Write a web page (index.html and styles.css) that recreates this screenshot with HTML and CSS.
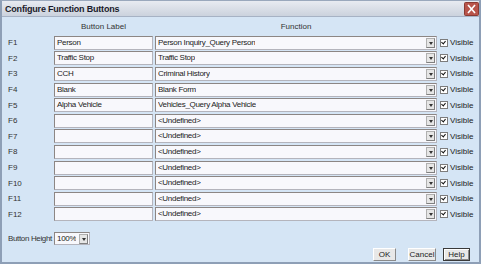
FILE: index.html
```html
<!DOCTYPE html>
<html lang="en">
<head>
	<meta charset="UTF-8">
	<title>Configure Function Buttons</title>
	<link rel="stylesheet" href="styles.css">
</head>
<body>
	<!--窗口-->
	<div class="dialog">
		<div class="titlebar">
			<span class="title">Configure Function Buttons</span>
			<span class="close">
				<svg width="15" height="14" viewBox="0 0 15 14">
					<rect x="0.5" y="0.5" width="14" height="13" rx="1" fill="#b8544a" stroke="#8a3a32"/>
					<path d="M4 3 L11 11 M11 3 L4 11" stroke="#fff" stroke-width="1.6"/>
				</svg>
			</span>
		</div>
		<div class="body">
			<div class="grid">
				<span></span>
				<span class="head">Button Label</span>
				<span class="head">Function</span>
				<span></span>

				<span class="key">F1</span>
				<span class="text">Person</span>
				<span class="select"><span class="val">Person Inquiry_Query Person</span><span class="arrow"></span></span>
				<span class="vis"><span class="check"></span>Visible</span>

				<span class="key">F2</span>
				<span class="text">Traffic Stop</span>
				<span class="select"><span class="val">Traffic Stop</span><span class="arrow"></span></span>
				<span class="vis"><span class="check"></span>Visible</span>

				<span class="key">F3</span>
				<span class="text">CCH</span>
				<span class="select"><span class="val">Criminal History</span><span class="arrow"></span></span>
				<span class="vis"><span class="check"></span>Visible</span>

				<span class="key">F4</span>
				<span class="text">Blank</span>
				<span class="select"><span class="val">Blank Form</span><span class="arrow"></span></span>
				<span class="vis"><span class="check"></span>Visible</span>

				<span class="key">F5</span>
				<span class="text">Alpha Vehicle</span>
				<span class="select"><span class="val">Vehicles_Query Alpha Vehicle</span><span class="arrow"></span></span>
				<span class="vis"><span class="check"></span>Visible</span>

				<span class="key">F6</span>
				<span class="text"></span>
				<span class="select"><span class="val">&lt;Undefined&gt;</span><span class="arrow"></span></span>
				<span class="vis"><span class="check"></span>Visible</span>

				<span class="key">F7</span>
				<span class="text"></span>
				<span class="select"><span class="val">&lt;Undefined&gt;</span><span class="arrow"></span></span>
				<span class="vis"><span class="check"></span>Visible</span>

				<span class="key">F8</span>
				<span class="text"></span>
				<span class="select"><span class="val">&lt;Undefined&gt;</span><span class="arrow"></span></span>
				<span class="vis"><span class="check"></span>Visible</span>

				<span class="key">F9</span>
				<span class="text"></span>
				<span class="select"><span class="val">&lt;Undefined&gt;</span><span class="arrow"></span></span>
				<span class="vis"><span class="check"></span>Visible</span>

				<span class="key">F10</span>
				<span class="text"></span>
				<span class="select"><span class="val">&lt;Undefined&gt;</span><span class="arrow"></span></span>
				<span class="vis"><span class="check"></span>Visible</span>

				<span class="key">F11</span>
				<span class="text"></span>
				<span class="select"><span class="val">&lt;Undefined&gt;</span><span class="arrow"></span></span>
				<span class="vis"><span class="check"></span>Visible</span>

				<span class="key">F12</span>
				<span class="text"></span>
				<span class="select"><span class="val">&lt;Undefined&gt;</span><span class="arrow"></span></span>
				<span class="vis"><span class="check"></span>Visible</span>
			</div>

			<!--按钮高度-->
			<div class="height">
				<span class="key">Button Height</span>
				<span class="select small"><span class="val">100%</span><span class="arrow"></span></span>
			</div>

			<div class="buttons">
				<span class="btn ok">OK</span>
				<span class="btn cancel">Cancel</span>
				<span class="btn help">Help</span>
			</div>
		</div>
	</div>
</body>
</html>
```

FILE: styles.css
```css
* {
    padding: 0;
    margin: 0;
    box-sizing: border-box;
}

body {
    width: 481px;
    height: 265px;
    overflow: hidden;
    font-family: "Liberation Sans", Arial, sans-serif;
    font-size: 8px;
    color: #222;
    background: #fff;
}

.dialog {
    width: 481px;
    height: 264px;
    border: 2px solid #8e9fb6;
    border-top: 1px solid #9aa8bc;
    background: #d5e5f5;
    display: flex;
    flex-direction: column;
}

.titlebar {
    height: 16px;
    display: flex;
    align-items: center;
    justify-content: space-between;
    padding: 0 0 0 3px;
    background: linear-gradient(#e8ebf1, #cbd2dd);
    border-bottom: 1px solid #a6b2c4;
}

.title {
    font-size: 9px;
    font-weight: bold;
    letter-spacing: -0.2px;
    color: #1a1a2a;
}

.close {
    display: flex;
    margin-top: 1px;
}

.body {
    flex: 1;
    padding: 0 6px;
    display: flex;
    flex-direction: column;
}

.grid {
    display: grid;
    grid-template-columns: 44px 99px 282px auto;
    grid-template-rows: 18px;
    grid-auto-rows: 15.6px;
    column-gap: 2px;
    align-items: center;
}

.head {
    text-align: center;
    color: #333;
    padding-top: 1px;
}

.key {
    color: #333;
    white-space: nowrap;
}

.text,
.select {
    height: 14px;
    background: #f8f8fc;
    border: 1px solid #b4b4bc;
    border-top-color: #8c8684;
    border-left-color: #8c8684;
    line-height: 12px;
    padding-left: 2px;
    white-space: nowrap;
    overflow: hidden;
    letter-spacing: -0.3px;
}

.select {
    display: flex;
    justify-content: space-between;
    padding-right: 1px;
}

.val {
    overflow: hidden;
}

.arrow {
    width: 9px;
    height: 10px;
    margin-top: 1px;
    background: #e6e6e6;
    border: 1px solid #b0b0b0;
    border-right-color: #808080;
    border-bottom-color: #808080;
    position: relative;
}

/* 小三角 */
.arrow:after {
    content: "";
    position: absolute;
    left: 2px;
    top: 3px;
    border: 2px solid transparent;
    border-top: 3px solid #333;
}

.vis {
    display: flex;
    align-items: center;
    gap: 2px;
    padding-left: 1px;
    color: #222;
}

.check {
    width: 8px;
    height: 8px;
    background: #fff;
    border: 1px solid #7c7c7c;
    position: relative;
}

.check:after {
    content: "";
    position: absolute;
    left: 1px;
    top: 0;
    width: 2px;
    height: 3px;
    border: solid #111;
    border-width: 0 1.5px 1.5px 0;
    transform: rotate(40deg);
}

.height {
    display: flex;
    align-items: center;
    margin-top: 10px;
}

.height .key {
    width: 46px;
    flex-shrink: 0;
    letter-spacing: -0.35px;
}

.select.small {
    width: 36px;
    height: 13px;
    flex-shrink: 0;
}

.buttons {
    display: flex;
    justify-content: flex-end;
    margin-top: 3px;
    padding-right: 3px;
}

.btn {
    height: 13px;
    line-height: 11px;
    text-align: center;
    background: #e8e8e8;
    border: 1px solid #fff;
    border-right-color: #8a8a8a;
    border-bottom-color: #8a8a8a;
    color: #222;
}

.ok {
    width: 23px;
}

.cancel {
    width: 28px;
    margin-left: 12px;
}

.help {
    width: 27px;
    margin-left: 7px;
    border-color: #3a3a3a;
    box-shadow: inset 1px 1px #fff, inset -1px -1px #8a8a8a;
}
```
